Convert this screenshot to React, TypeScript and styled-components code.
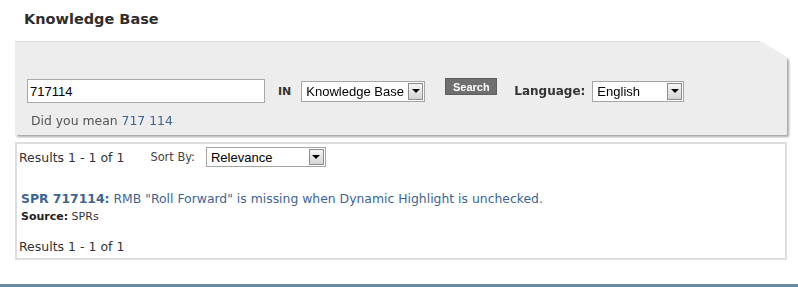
import * as React from 'react';
import styled, {createGlobalStyle} from 'styled-components';

const GlobalStyle = createGlobalStyle`
  html, body {
    margin: 0;
    padding: 0;
    background: #fff;
    overflow: hidden;
  }
  body {
    font-family: Verdana, "DejaVu Sans", sans-serif;
    color: #333;
  }
`;

const Page = styled.div`
  width: 798px;
  height: 287px;
  display: flex;
  flex-direction: column;
`;

const Content = styled.div`
  padding: 0 11px 0 15px;
`;

const Title = styled.h1`
  margin: 0;
  padding: 11px 0 0 9px;
  height: 41px;
  box-sizing: border-box;
  font-family: "DejaVu Sans", Verdana, sans-serif;
  font-size: 14.5px;
  font-weight: bold;
  color: #2e2e2e;
`;

const PanelShadow = styled.div`
  filter: drop-shadow(2px 2px 1px rgba(0, 0, 0, 0.35));
`;

const Panel = styled.div`
  height: 94px;
  box-sizing: border-box;
  padding: 37px 12px 0 12px;
  background: #ededed;
  border-top: 1px solid #dcdcdc;
  clip-path: polygon(0 0, calc(100% - 28px) 0, 100% 17px, 100% 100%, 0 100%);
`;

const SearchRow = styled.div`
  display: flex;
  align-items: center;
  height: 24px;
`;

const TextInput = styled.div`
  width: 238px;
  height: 24px;
  box-sizing: border-box;
  border: 1px solid #a9a9a9;
  background: #fff;
  padding: 0 0 0 2px;
  display: flex;
  align-items: center;
  font-family: "Liberation Sans", Arial, sans-serif;
  font-size: 13px;
  color: #000;
`;

const Label = styled.span<{ $ml: number }>`
  margin-left: ${p => p.$ml}px;
  font-family: "DejaVu Sans", Verdana, sans-serif;
  font-weight: bold;
  font-size: ${p => (p.$ml > 15 ? 12 : 11)}px;
  color: #333;
`;

const Select = styled.div<{ $w: number; $h: number; $ml: number }>`
  margin-left: ${p => p.$ml}px;
  width: ${p => p.$w}px;
  height: ${p => p.$h}px;
  box-sizing: border-box;
  border: 1px solid #a5a5a5;
  background: #fff;
  display: flex;
  align-items: center;
  font-family: "Liberation Sans", Arial, sans-serif;
  font-size: 13px;
  color: #000;
  padding: 1px 1px 1px 4px;
`;

const SelectText = styled.span`
  flex: 1;
  white-space: nowrap;
  overflow: hidden;
`;

const Arrow = styled.span`
  width: 15px;
  align-self: stretch;
  box-sizing: border-box;
  border: 1px solid #8c8c8c;
  background: linear-gradient(to bottom, #f6f6f6, #d4d4d4);
  display: flex;
  align-items: center;
  justify-content: center;

  &::after {
    content: '';
    border-left: 4px solid transparent;
    border-right: 4px solid transparent;
    border-top: 4px solid #000;
  }
`;

const SearchButton = styled.div`
  align-self: flex-start;
  margin: -1px 0 0 20px;
  width: 52px;
  height: 17px;
  box-sizing: border-box;
  background: #6f6f6f;
  border: 1px solid #5e5e5e;
  color: #fff;
  font-family: "Liberation Sans", Arial, sans-serif;
  font-weight: bold;
  font-size: 11px;
  display: flex;
  align-items: center;
  justify-content: center;
`;

const Suggestion = styled.div`
  margin: 10px 0 0 4px;
  font-size: 12.4px;
  color: #555;
`;

const Link = styled.a<{ $bold?: boolean }>`
  color: #3c6595;
  text-decoration: none;
  font-weight: ${p => (p.$bold ? 'bold' : 'normal')};
`;

const Results = styled.div`
  margin-top: 7px;
  height: 118px;
  box-sizing: border-box;
  border: 2px solid #dedede;
  padding: 3px 0 0 2px;
  display: flex;
  flex-direction: column;
`;

const ResultsBar = styled.div`
  display: flex;
  align-items: center;
  height: 20px;
  font-size: 12.5px;
`;

const SortLabel = styled.span`
  margin-left: 26px;
  font-size: 11.4px;
  color: #444;
`;

const Item = styled.div`
  margin: 23px 0 0 2px;
  font-size: 12.4px;
  color: #3c6595;
  line-height: 18px;
`;

const Source = styled.div`
  font-size: 11px;
  color: #333;
  line-height: 17px;

  b {
    color: #222;
  }
`;

const Count = styled.div`
  margin-top: 14px;
  font-size: 12.5px;
  line-height: 16px;
`;

const FooterBar = styled.div`
  margin-top: 24px;
  height: 10px;
  background: #6a8ca1;
`;

const Dropdown = ({value, w, h, ml}: {value: string; w: number; h: number; ml: number}) => (
  <Select $w={w} $h={h} $ml={ml}>
    <SelectText>{value}</SelectText>
    <Arrow />
  </Select>
);

export default function App() {
  return (
    <Page>
      <GlobalStyle />
      <Content>
        <Title>Knowledge Base</Title>
        <PanelShadow>
          <Panel>
            <SearchRow>
              <TextInput>717114</TextInput>
              <Label $ml={13}>IN</Label>
              <Dropdown value="Knowledge Base" w={124} h={21} ml={10} />
              <SearchButton>Search</SearchButton>
              <Label $ml={17}>Language:</Label>
              <Dropdown value="English" w={92} h={21} ml={7} />
            </SearchRow>
            <Suggestion>
              Did you mean <Link href="#">717 114</Link>
            </Suggestion>
          </Panel>
        </PanelShadow>
        <Results>
          <ResultsBar>
            Results 1 - 1 of 1
            <SortLabel>Sort By:</SortLabel>
            <Dropdown value="Relevance" w={120} h={20} ml={11} />
          </ResultsBar>
          <Item>
            <Link href="#" $bold>SPR 717114:</Link>{' '}
            <Link href="#">RMB "Roll Forward" is missing when Dynamic Highlight is unchecked.</Link>
            <Source>
              <b>Source:</b> SPRs
            </Source>
          </Item>
          <Count>Results 1 - 1 of 1</Count>
        </Results>
      </Content>
      <FooterBar />
    </Page>
  );
}
